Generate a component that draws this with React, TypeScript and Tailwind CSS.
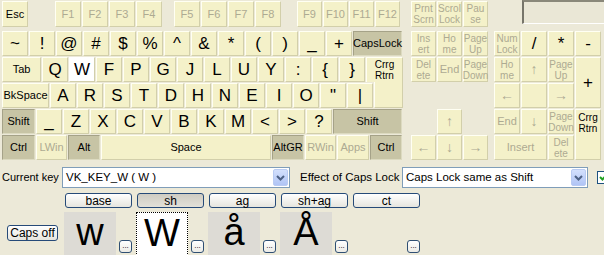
import React from 'react'

type Tone = 'n' | 'd' | 'w'
type K = { l: string; w: string; t?: Tone; g?: boolean; s?: 'b' | 's' | 'x' | 'a'; c?: string }

const tones: Record<Tone, string> = {
  n: 'bg-[#F4F1C9] border-t-[#FFFFF3] border-l-[#FFFFF3] border-b-[#D2CFAA] border-r-[#D2CFAA]',
  d: 'bg-[#C7C4A5] border-t-[#A5A288] border-l-[#A5A288] border-b-[#DCDAC0] border-r-[#DCDAC0]',
  w: 'bg-white border-t-white border-l-white border-b-[#D2CFAA] border-r-[#D2CFAA]',
}
const sizes = { b: 'text-[17px]', s: 'text-[11px]', x: 'text-[10px] leading-[11px]', a: 'text-[14px]' }

function Key({ l, w, t = 'n', g, s = 'b', c = '' }: K) {
  return (
    <div
      className={`flex shrink-0 items-center justify-center whitespace-pre-line border text-center ${tones[t]} ${sizes[s]} ${
        g ? 'text-[#ADAA92]' : 'text-black'
      } ${w} ${c}`}
    >
      {l}
    </div>
  )
}

const k = (l: string, extra: Partial<K> = {}): K => ({ l, w: 'w-[26px]', ...extra })

const row1: K[] = ['~', '!', '@', '#', '$', '%', '^', '&', '*', '(', ')', '_', '+'].map(l => k(l))
row1.push({ l: 'CapsLock', w: 'w-[49px]', t: 'd', s: 's' })

const row2: K[] = [
  { l: 'Tab', w: 'w-[39px]', s: 's' },
  k('Q'),
  k('W', { t: 'w' }),
  ...['F', 'P', 'G', 'J', 'L', 'U', 'Y', ':', '{', '}'].map(l => k(l)),
  { l: 'Crrg\nRtrn', w: 'w-[37px]', s: 'x', c: 'border-b-0' },
]

const row3: K[] = [
  { l: 'BkSpace', w: 'w-[47px]', s: 's' },
  ...['A', 'R', 'S', 'T', 'D', 'H', 'N', 'E', 'I', 'O', '"', '|'].map(l => k(l)),
  { l: '', w: 'w-[29px]', c: '-mt-px h-[26px] border-t-0' },
]

const row4: K[] = [
  { l: 'Shift', w: 'w-[33px]', t: 'd', s: 's' },
  ...['_', 'Z', 'X', 'C', 'V', 'B', 'K', 'M', '<', '>', '?'].map(l => k(l)),
  { l: 'Shift', w: 'w-[69px]', t: 'd', s: 's' },
]

const row5: K[] = [
  { l: 'Ctrl', w: 'w-[33px]', t: 'd', s: 's' },
  { l: 'LWin', w: 'w-[31px]', g: true, s: 's' },
  { l: 'Alt', w: 'w-[32px]', t: 'd', s: 's' },
  { l: 'Space', w: 'w-[170px]', s: 's' },
  { l: 'AltGR', w: 'w-[32px]', t: 'd', s: 's' },
  { l: 'RWin', w: 'w-[31px]', g: true, s: 's' },
  { l: 'Apps', w: 'w-[32px]', g: true, s: 's' },
  { l: 'Ctrl', w: 'w-[32px]', t: 'd', s: 's' },
]

function Row({ keys }: { keys: K[] }) {
  return (
    <div className="flex h-[25px] items-start gap-px">
      {keys.map((key, i) => (
        <Key key={i} {...key} w={`${key.w} ${key.c?.includes('h-[') ? '' : 'h-[25px]'}`} />
      ))}
    </div>
  )
}

function Chevron() {
  return (
    <svg width="9" height="6" viewBox="0 0 9 6">
      <path d="M1 1 L4.5 4.5 L8 1" fill="none" stroke="#4D6185" strokeWidth="2" />
    </svg>
  )
}

function Select({ text, w }: { text: string; w: string }) {
  return (
    <div className={`flex h-[21px] shrink-0 items-center justify-between border border-[#7F9DB9] bg-white pl-[3px] ${w}`}>
      <span className="text-[11.5px] whitespace-nowrap text-black">{text}</span>
      <div className="mr-px flex h-[17px] w-[15px] items-center justify-center rounded-[2px] border border-[#B9CBF3] bg-linear-to-b from-[#D3E0FD] to-[#B0C4F5]">
        <Chevron />
      </div>
    </div>
  )
}

function XpButton({ label, sel, w }: { label: string; sel?: boolean; w: string }) {
  return (
    <div
      className={`flex items-center justify-center rounded-[3px] border border-[#264A78] text-[12px] leading-none whitespace-nowrap text-black ${w} ${
        sel ? 'bg-linear-to-b from-[#CFCCC2] to-[#E2E0D8]' : 'bg-linear-to-b from-white to-[#E6E5DE]'
      }`}
    >
      {label}
    </div>
  )
}

function Dots() {
  return (
    <div className="mt-[28px] ml-[3px] flex h-[13px] w-[13px] items-end justify-center rounded-[3px] border border-[#2F4F73] bg-linear-to-b from-white to-[#ECEBE5] pb-[2px] text-[8px] leading-none text-black">
      ...
    </div>
  )
}

const chars = [
  { ch: 'w', box: 'bg-[#DDDBD5]' },
  { ch: 'W', box: 'bg-white border border-dotted border-black' },
  { ch: 'å', box: 'bg-[#DDDBD5]' },
  { ch: 'Å', box: 'bg-[#DDDBD5]' },
  { ch: '', box: '' },
]

export default function App() {
  return (
    <div className="h-[255px] w-[604px] overflow-hidden bg-[#ECE9D8] font-['Liberation_Sans',Arial,sans-serif] text-black">
      {/* function row */}
      <div className="flex h-[31px] items-start pt-px pl-[2px]">
        <Key l="Esc" w="w-[26px] h-[26px]" s="s" />
        <div className="ml-[27px] flex gap-px">
          {['F1', 'F2', 'F3', 'F4'].map(f => (
            <Key key={f} l={f} w="w-[26px] h-[26px]" s="s" g />
          ))}
        </div>
        <div className="ml-[12px] flex gap-px">
          {['F5', 'F6', 'F7', 'F8'].map(f => (
            <Key key={f} l={f} w="w-[26px] h-[26px]" s="s" g />
          ))}
        </div>
        <div className="ml-[16px] flex gap-px">
          {['F9', 'F10', 'F11', 'F12'].map(f => (
            <Key key={f} l={f} w="w-[25px] h-[26px]" s="s" g />
          ))}
        </div>
        <div className="ml-[11px] flex gap-px">
          {['Prnt\nScrn', 'Scrol\nLock', 'Pau\nse'].map(f => (
            <Key key={f} l={f} w="w-[25px] h-[26px]" s="x" g />
          ))}
        </div>
        <div className="-mt-px ml-[34px] h-[24px] w-[82px] border-t-2 border-l-2 border-t-[#8A887A] border-l-[#77756A] border-b border-b-[#FFFFFF] bg-[#EAE7D6]" />
      </div>

      {/* main block + nav + numpad */}
      <div className="flex h-[129px] items-start">
        <div className="ml-[2px] flex w-[400px] flex-col gap-px">
          <Row keys={row1} />
          <Row keys={row2} />
          <Row keys={row3} />
          <Row keys={row4} />
          <Row keys={row5} />
        </div>

        <div className="ml-[9px] grid grid-cols-[25px_25px_25px] grid-rows-[25px_25px_25px_25px_25px] gap-px">
          <Key l={'Ins\nert'} w="w-[25px] h-[25px]" s="x" g />
          <Key l={'Ho\nme'} w="w-[25px] h-[25px]" s="x" g />
          <Key l={'Page\nUp'} w="w-[25px] h-[25px]" s="x" g />
          <Key l={'Del\nete'} w="w-[25px] h-[25px]" s="x" g />
          <Key l="End" w="w-[25px] h-[25px]" s="s" g />
          <Key l={'Page\nDown'} w="w-[25px] h-[25px]" s="x" g />
          <Key l="↑" w="w-[25px] h-[25px] col-start-2 row-start-4" s="a" g />
          <Key l="←" w="w-[25px] h-[25px] col-start-1 row-start-5" s="a" g />
          <Key l="↓" w="w-[25px] h-[25px] col-start-2 row-start-5" s="a" g />
          <Key l="→" w="w-[25px] h-[25px] col-start-3 row-start-5" s="a" g />
        </div>

        <div className="ml-[6px] grid grid-cols-[26px_26px_26px_26px] grid-rows-[25px_25px_25px_25px_25px] gap-px">
          <Key l={'Num\nLock'} w="w-[26px] h-[25px]" s="x" g />
          <Key l="/" w="w-[26px] h-[25px]" />
          <Key l="*" w="w-[26px] h-[25px]" />
          <Key l="-" w="w-[26px] h-[25px]" />
          <Key l={'Ho\nme'} w="w-[26px] h-[25px]" s="x" g />
          <Key l="↑" w="w-[26px] h-[25px]" s="a" g />
          <Key l={'Page\nUp'} w="w-[26px] h-[25px]" s="x" g />
          <Key l="+" w="w-[26px] h-[51px] row-span-2" />
          <Key l="←" w="w-[26px] h-[25px]" s="a" g />
          <Key l="" w="w-[26px] h-[25px]" />
          <Key l="→" w="w-[26px] h-[25px]" s="a" g />
          <Key l="End" w="w-[26px] h-[25px]" s="s" g />
          <Key l="↓" w="w-[26px] h-[25px]" s="a" g />
          <Key l={'Page\nDown'} w="w-[26px] h-[25px]" s="x" g />
          <Key l={'Crrg\nRtrn'} w="w-[26px] h-[51px] row-span-2 items-start pt-[2px]" s="x" />
          <Key l="Insert" w="w-[53px] h-[25px] col-span-2" s="s" g />
          <Key l={'Del\nete'} w="w-[26px] h-[25px]" s="x" g />
        </div>
      </div>

      {/* current key / caps lock */}
      <div className="mt-[7px] flex h-[21px] items-center">
        <span className="ml-[2px] w-[60px] shrink-0 text-[11px] whitespace-nowrap">Current key</span>
        <Select text="VK_KEY_W ( W )" w="w-[228px]" />
        <span className="ml-[10px] w-[102px] shrink-0 text-[11.5px] whitespace-nowrap">Effect of Caps Lock</span>
        <Select text="Caps Lock same as Shift" w="w-[186px]" />
        <div className="ml-[9px] flex h-[13px] w-[13px] shrink-0 items-center justify-center border border-[#1C5180] bg-white">
          <svg width="9" height="9" viewBox="0 0 9 9">
            <path d="M1 4 L3.5 6.5 L8 1.5" fill="none" stroke="#21A121" strokeWidth="2" />
          </svg>
        </div>
      </div>

      {/* shift state tabs */}
      <div className="mt-[5px] ml-[65px] flex h-[15px] gap-[5px]">
        <XpButton label="base" w="w-[67px]" />
        <XpButton label="sh" w="w-[67px]" sel />
        <XpButton label="ag" w="w-[67px]" />
        <XpButton label="sh+ag" w="w-[67px]" />
        <XpButton label="ct" w="w-[67px]" />
      </div>

      {/* characters */}
      <div className="mt-[4px] flex items-start">
        <div className="mt-[13px] ml-[7px]">
          <XpButton label="Caps off" w="w-[51px] h-[16px] text-[11.5px]" />
        </div>
        <div className="ml-[6px] flex gap-[4px]">
          {chars.map((c, i) => (
            <div key={i} className="flex items-start">
              <div className={`flex h-[46px] w-[52px] justify-center pt-[1px] text-[38px] leading-none ${c.box}`}>{c.ch}</div>
              <Dots />
            </div>
          ))}
        </div>
      </div>
    </div>
  )
}
